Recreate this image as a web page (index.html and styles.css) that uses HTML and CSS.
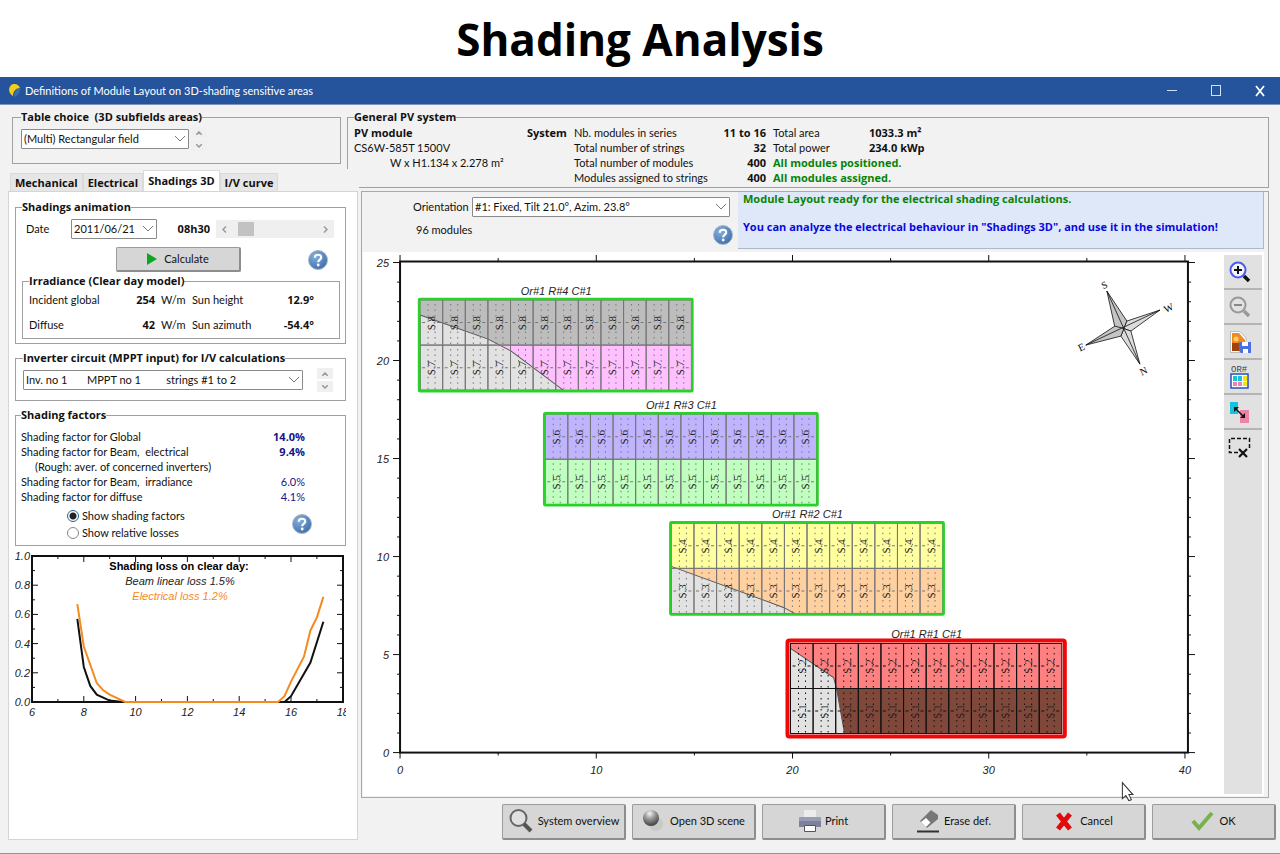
FILE: index.html
```html
<!DOCTYPE html>
<html lang="en">
	<head>
		<meta charset="UTF-8">
		<title>Shading Analysis</title>
		<link rel="stylesheet" href="styles.css">
	</head>
	<body>
		<svg width="0" height="0" class="defs">
			<defs>
				<radialGradient id="helpFill" cx="35%" cy="30%" r="75%">
					<stop offset="0" stop-color="#86b0dc"/>
					<stop offset="1" stop-color="#3f6fac"/>
				</radialGradient>
				<radialGradient id="ball" cx="42%" cy="22%" r="75%">
					<stop offset="0" stop-color="#f4f4f4"/>
					<stop offset=".45" stop-color="#9a9a9a"/>
					<stop offset="1" stop-color="#444"/>
				</radialGradient>
				<symbol id="help" viewBox="0 0 20 20">
					<circle cx="10" cy="10" r="9.5" fill="url(#helpFill)" stroke="#a9b9cc"/>
					<path d="M6.8 7.8 C6.8 3.8 13.4 3.8 13.2 7.6 C13 9.6 10.2 9.8 10.2 12.2" fill="none" stroke="#fff" stroke-width="2.2"/>
					<circle cx="10.2" cy="15" r="1.4" fill="#fff"/>
				</symbol>
				<symbol id="down" viewBox="0 0 12 7">
					<path d="M1 1 L6 6 L11 1" fill="none" stroke="#777"/>
				</symbol>
			</defs>
		</svg>

		<h1 class="title">Shading Analysis</h1>

		<div class="titlebar">
			<svg class="logo" width="13" height="15" viewBox="0 0 13 15">
				<path d="M11 5 C8 6 6 9 6 14 C9 13 12 10 12 6z" fill="#3d6fae"/>
				<path d="M5 13 C0 10 0 4 4 1.5 C8 0 11 2 12 5 C8 5 5 8 5 13z" fill="#f3cf1d"/>
			</svg>
			<span class="caption">Definitions of Module Layout on 3D-shading sensitive areas</span>
			<button class="winBtn" aria-label="Minimize"><svg width="12" height="12"><path d="M1 5.5H11" stroke="#cfe0fa"/></svg></button>
			<button class="winBtn" aria-label="Maximize"><svg width="12" height="12"><rect x="1.5" y="0.5" width="9" height="10" fill="none" stroke="#cfe0fa"/></svg></button>
			<button class="winBtn" aria-label="Close"><svg width="12" height="12"><path d="M2 1L10 11M10 1L2 11" stroke="#fff" stroke-width="1.8"/></svg></button>
		</div>

		<div class="window">
			<div class="top">
				<div class="choice">
					<fieldset class="tableChoice">
						<legend>Table choice&nbsp; (3D subfields areas)</legend>
						<span class="combo wField">
							<select aria-label="Table choice"><option>(Multi) Rectangular field</option></select>
							<svg class="arrow" width="12" height="7"><use href="#down"/></svg>
						</span>
						<span class="spin flat">
							<button aria-label="Previous table"><svg width="6" height="4"><path d="M0 4L3 1L6 4" fill="none" stroke="#999" stroke-width="1.5"/></svg></button>
							<button aria-label="Next table"><svg width="6" height="4"><path d="M0 0L3 3L6 0" fill="none" stroke="#999" stroke-width="1.5"/></svg></button>
						</span>
					</fieldset>
					<div class="tabs">
						<button>Mechanical</button>
						<button>Electrical</button>
						<button class="active">Shadings 3D</button>
						<button>I/V curve</button>
					</div>
				</div>
				<fieldset class="general">
					<legend>General PV system</legend>
					<div class="pv">
						<b>PV module</b><b>System</b><span>Nb. modules in series</span><b class="num">11 to 16</b><span>Total area</span><b>1033.3 m²</b>
						<span>CS6W-585T 1500V</span><span></span><span>Total number of strings</span><b class="num">32</b><span>Total power</span><b>234.0 kWp</b>
						<span class="dims">W x H1.134 x 2.278 m²</span><span></span><span>Total number of modules</span><b class="num">400</b><b class="ok">All modules positioned.</b>
						<span></span><span></span><span>Modules assigned to strings</span><b class="num">400</b><b class="ok">All modules assigned.</b>
					</div>
				</fieldset>
			</div>

			<div class="body">
				<div class="panel">
					<fieldset class="animation">
						<legend>Shadings animation</legend>
						<div class="dateRow">
							<label for="date">Date</label>
							<span class="combo wDate">
								<select id="date"><option>2011/06/21</option></select>
								<svg class="arrow" width="12" height="7"><use href="#down"/></svg>
							</span>
							<b class="hour">08h30</b>
							<div class="scroll">
								<button aria-label="Earlier"><svg width="5" height="7"><path d="M4 0.5L1 3.5L4 6.5" fill="none" stroke="#999" stroke-width="1.5"/></svg></button>
								<input type="range" min="5" max="20" value="6" aria-label="Time of day">
								<button aria-label="Later"><svg width="5" height="7"><path d="M1 0.5L4 3.5L1 6.5" fill="none" stroke="#999" stroke-width="1.5"/></svg></button>
							</div>
						</div>
						<div class="calcRow">
							<button class="btn calc"><svg width="10" height="12"><path d="M0 0L10 6L0 12z" fill="#0ea522"/></svg>Calculate</button>
							<svg class="help" width="20" height="20"><use href="#help"/></svg>
						</div>
						<fieldset class="irradiance">
							<legend>Irradiance (Clear day model)</legend>
							<div class="irrGrid">
								<span>Incident global</span><b class="num">254</b><span>W/m</span><span>Sun height</span><b class="num">12.9°</b>
								<span>Diffuse</span><b class="num">42</b><span>W/m</span><span>Sun azimuth</span><b class="num">-54.4°</b>
							</div>
						</fieldset>
					</fieldset>

					<fieldset class="inverter">
						<legend>Inverter circuit (MPPT input) for I/V calculations</legend>
						<span class="combo wInv">
							<select aria-label="Inverter circuit"><option>Inv. no 1 &nbsp; &nbsp; &nbsp; MPPT no 1 &nbsp; &nbsp; &nbsp; &nbsp; strings #1 to 2</option></select>
							<svg class="arrow" width="12" height="7"><use href="#down"/></svg>
						</span>
						<span class="spin">
							<button aria-label="Previous circuit"><svg width="6" height="4"><path d="M0 4L3 1L6 4" fill="none" stroke="#999" stroke-width="1.5"/></svg></button>
							<button aria-label="Next circuit"><svg width="6" height="4"><path d="M0 0L3 3L6 0" fill="none" stroke="#999" stroke-width="1.5"/></svg></button>
						</span>
					</fieldset>

					<fieldset class="factors">
						<legend>Shading factors</legend>
						<div class="factor"><span>Shading factor for Global</span><b>14.0%</b></div>
						<div class="factor"><span>Shading factor for Beam,&nbsp; electrical</span><b>9.4%</b></div>
						<div class="factor rough"><span>(Rough: aver. of concerned inverters)</span></div>
						<div class="factor"><span>Shading factor for Beam,&nbsp; irradiance</span><i>6.0%</i></div>
						<div class="factor"><span>Shading factor for diffuse</span><i>4.1%</i></div>
						<div class="show">
							<div>
								<label><input type="radio" name="show" checked>Show shading factors</label>
								<label><input type="radio" name="show">Show relative losses</label>
							</div>
							<svg class="help" width="20" height="20"><use href="#help"/></svg>
						</div>
					</fieldset>

					<svg class="lossChart" id="lossChart" viewBox="0 0 331 172"></svg>
				</div>

				<div class="right">
					<div class="layout">
						<div class="head">
							<div class="orient">
								<div class="orientRow">
									<label for="orient">Orientation</label>
									<span class="combo wOrient">
										<select id="orient"><option>#1: Fixed, Tilt 21.0°, Azim. 23.8°</option></select>
										<svg class="arrow" width="12" height="7"><use href="#down"/></svg>
									</span>
								</div>
								<div class="countRow">
									<span>96 modules</span>
									<svg class="help" width="20" height="20"><use href="#help"/></svg>
								</div>
							</div>
							<div class="message">
								<p class="ready">Module Layout ready for the electrical shading calculations.</p>
								<p class="hint">You can analyze the electrical behaviour in "Shadings 3D", and use it in the simulation!</p>
							</div>
						</div>
						<div class="plotRow">
							<svg class="plot" id="plot" viewBox="0 0 860 543"></svg>
							<div class="tools">
								<button aria-label="Zoom in"><svg width="24" height="24">
									<circle cx="10" cy="10" r="7.5" fill="#f4f4ff" stroke="#4a5cf0" stroke-width="2"/>
									<path d="M6 10H14M10 6V14" stroke="#111" stroke-width="2"/>
									<path d="M16 16L21 21" stroke="#111" stroke-width="3.5"/>
								</svg></button>
								<button aria-label="Zoom out"><svg width="24" height="24">
									<circle cx="10" cy="10" r="7.5" fill="none" stroke="#999" stroke-width="2"/>
									<path d="M6 10H14" stroke="#888" stroke-width="2"/>
									<path d="M16 16L21 21" stroke="#999" stroke-width="3.5"/>
								</svg></button>
								<button aria-label="Save picture"><svg width="24" height="24">
									<path d="M2.5 1.5H12L18 8V22.5H2.5z" fill="#fff" stroke="#bbb"/>
									<path d="M4 3H11L17 10V21H4z" fill="#f08a24"/>
									<path d="M4 13H17V21H4z" fill="#a3400f"/>
									<circle cx="8" cy="9" r="2.5" fill="#ffd257"/>
									<path d="M11 12H23V23H13L11 21z" fill="#4a6fe0"/>
									<path d="M14 12H20V16H14zM15 19H20V23H15z" fill="#fff"/>
								</svg></button>
								<button aria-label="Orientation colours"><svg width="24" height="26">
									<text x="3" y="8" class="orText">OR#</text>
									<rect x="3" y="10" width="17" height="14" fill="#fff" stroke="#2a4fc0" stroke-width="1.5"/>
									<path d="M5 12h4v5h-4zM10 12h4v5h-4z" fill="#16c3dc"/>
									<path d="M15 12h4v5h-4zM15 18h4v4h-4z" fill="#f0e616"/>
									<path d="M5 18h4v4h-4zM10 18h4v4h-4z" fill="#ee82a8"/>
								</svg></button>
								<button aria-label="Swap modules"><svg width="24" height="24">
									<path d="M2 2H10V14H2z" fill="#16c3dc"/>
									<path d="M12 10H21V23H12z" fill="#ee82a8"/>
									<path d="M8 9L15 16" stroke="#111" stroke-width="1.5"/>
									<path d="M6 7H11L6 12zM17 18H12L17 13z" fill="#111"/>
								</svg></button>
								<button aria-label="Clear selection"><svg width="24" height="24">
									<path d="M10 16.5H1.5V2.5H21.5V12" fill="none" stroke="#111" stroke-width="1.5" stroke-dasharray="4 2"/>
									<path d="M11 13L19 21M19 13L11 21" stroke="#111" stroke-width="2.2"/>
								</svg></button>
							</div>
						</div>
					</div>

					<div class="buttons">
						<button class="btn"><svg width="26" height="26">
							<circle cx="10.5" cy="10" r="8" fill="#e0e0e0" stroke="#666" stroke-width="2"/>
							<path d="M16 16L23 23" stroke="#555" stroke-width="4"/>
						</svg>System overview</button>
						<button class="btn"><svg width="24" height="24">
							<circle cx="14" cy="15" r="7" fill="#c6c9c6"/>
							<circle cx="9" cy="9" r="8" fill="url(#ball)"/>
						</svg>Open 3D scene</button>
						<button class="btn"><svg width="22" height="24">
							<path d="M5 1H17V9H5z" fill="#ececec"/>
							<path d="M0 8H22V18H0z" fill="#7f819b"/>
							<path d="M0 8H22V12H0z" fill="#9a9cb4"/>
							<path d="M5.5 16.5H16.5V22.5H5.5z" fill="#fff" stroke="#555"/>
						</svg>Print</button>
						<button class="btn"><svg width="24" height="24">
							<path d="M15 1L22 6V10L11 19L4 12z" fill="#777"/>
							<path d="M10 9L14.5 13.5L10 18L5 13z" fill="#fff"/>
							<path d="M1 22.5H23" stroke="#333" stroke-width="2"/>
						</svg>Erase def.</button>
						<button class="btn cancel"><svg width="20" height="20">
							<path d="M4 3L16 18M16 3L4 18" stroke="#e00b0b" stroke-width="5"/>
						</svg>Cancel</button>
						<button class="btn"><svg width="24" height="22">
							<path d="M2 11L8 18L21 3" fill="none" stroke="#79b24d" stroke-width="4"/>
						</svg>OK</button>
					</div>
				</div>
			</div>
		</div>

		<script src="script.js"></script>
	</body>
</html>
```
FILE: styles.css
```css
*{
	box-sizing: border-box;
	margin: 0;
	padding: 0;
}
body{
	background: #fff;
	color: #111;
	font: 11px/14px Lato, "Noto Sans", sans-serif;
}
button, select, input{
	font: inherit;
	color: inherit;
}
button{
	border: 0;
	background: none;
}
svg{
	display: block;
	flex-shrink: 0;
}
b, legend, .title, .tabs, .message{
	font-family: "Open Sans", "Noto Sans", sans-serif;
}
.defs{
	position: absolute;
}
.title{
	padding: 9px 0 8px;
	font-size: 44px;
	line-height: 60px;
	font-weight: bold;
	text-align: center;
	color: #000;
}

/* title bar */
.titlebar{
	display: flex;
	align-items: center;
	height: 28px;
	padding: 0 6px 0 8px;
	background: #25539c;
	border-bottom: 1px solid #7f93b8;
	color: #fff;
}
.titlebar .caption{
	flex: 1;
	margin-left: 4px;
}
.winBtn{
	display: flex;
	justify-content: center;
	width: 28px;
	margin-left: 16px;
}

/* window */
.window{
	background: #f2f2f2;
	border-bottom: 1px solid #7f93c8;
	padding-bottom: 13px;
}
fieldset{
	min-width: 0;
	border: 1px solid #a0a0a0;
}
legend{
	line-height: 12px;
	font-weight: bold;
}
.num{
	text-align: right;
}
.combo{
	display: block;
	position: relative;
}
.combo select{
	display: block;
	width: 100%;
	height: 20px;
	padding-left: 2px;
	border: 1px solid #8a8a8a;
	border-radius: 1px;
	background: #fff;
	appearance: none;
}
.combo .arrow{
	position: absolute;
	right: 3px;
	top: 6px;
	pointer-events: none;
}
.wField{
	width: 168px;
}
.wDate{
	width: 86px;
}
.wInv{
	width: 280px;
}
.wOrient{
	width: 258px;
}
.spin{
	display: flex;
	flex-direction: column;
	gap: 2px;
}
.spin button{
	display: flex;
	align-items: center;
	justify-content: center;
	width: 16px;
	height: 11px;
	background: #f0f0f0;
}
.btn{
	display: flex;
	align-items: center;
	justify-content: center;
	gap: 4px;
	background: #d6d6d6;
	border: 1px solid #9b9b9b;
	border-right: 2px solid #8d8d8d;
	border-bottom: 2px solid #8d8d8d;
	border-radius: 2px;
}

.top{
	display: flex;
	padding: 6px 11px 0 0;
}
.choice{
	display: flex;
	flex-direction: column;
	justify-content: space-between;
	width: 347px;
	padding-right: 6px;
}
.tableChoice{
	display: flex;
	align-items: center;
	gap: 2px;
	margin-left: 12px;
	padding: 4px 8px 12px;
}
.tabs{
	display: flex;
	align-items: flex-end;
	padding-left: 10px;
}
.tabs button{
	height: 18px;
	padding: 0 4px;
	background: #e6e6e6;
	border: 1px solid #dadada;
	border-bottom: 0;
	font-weight: bold;
}
.tabs .active{
	height: 21px;
	background: #fff;
}
.general{
	position: relative;
	flex: 1;
	margin-bottom: 3px;
	padding: 2px 6px;
}
/* the frame is open where the tabs pass below it */
.general::after{
	content: "";
	position: absolute;
	left: -1px;
	bottom: -1px;
	width: 12px;
	height: 19px;
	background: #f2f2f2;
}
.pv{
	display: grid;
	grid-template-columns: 173px 47px 140px 52px 96px 1fr;
	grid-auto-rows: 15px;
	line-height: 15px;
	white-space: nowrap;
}
.pv .num + *{
	margin-left: 7px;
}
.pv .num + * + b{
	padding-left: 7px;
}
.pv .num + .ok + *{
	padding-left: 0;
}
.pv .dims{
	padding-left: 36px;
}
.ok{
	grid-column: span 2;
	color: #078307;
}

.body{
	display: flex;
	gap: 3px;
	padding-left: 8px;
}
.panel{
	width: 350px;
	padding: 9px 11px 0 6px;
	background: #fff;
	border: 1px solid #d5d5d5;
}
.animation{
	padding: 5px 5px 4px 6px;
}
.irradiance legend{
	margin-left: 6px;
}
.dateRow{
	display: flex;
	align-items: center;
	height: 22px;
	padding: 0 6px 0 4px;
}
.dateRow label{
	width: 45px;
}
.hour{
	flex: 1;
	padding-right: 6px;
	text-align: right;
}
.scroll{
	display: flex;
	width: 118px;
	height: 18px;
	background: #efefef;
}
.scroll button{
	display: flex;
	align-items: center;
	justify-content: center;
	width: 17px;
}
.scroll input{
	flex: 1;
	min-width: 0;
	appearance: none;
	background: none;
}
.scroll input::-webkit-slider-thumb{
	appearance: none;
	width: 16px;
	height: 14px;
	background: #c2c2c2;
}
.calcRow{
	display: flex;
	align-items: center;
	justify-content: space-between;
	padding: 7px 12px 3px 94px;
}
.calc{
	width: 125px;
	height: 25px;
	gap: 7px;
}
.irradiance{
	padding: 6px 25px 6px 0;
}
.irrGrid{
	display: grid;
	grid-template-columns: 76px 44px 25px 80px 1fr;
	column-gap: 6px;
	row-gap: 11px;
	padding-left: 6px;
	white-space: nowrap;
}
.inverter{
	display: flex;
	align-items: center;
	justify-content: space-between;
	margin-top: 8px;
	padding: 4px 12px 8px 7px;
}
.factors{
	margin-top: 8px;
	padding: 8px 5px 4px 5px;
}
.factor{
	display: flex;
	justify-content: space-between;
	padding-right: 35px;
	line-height: 15px;
	color: #111;
}
.factor b, .factor i{
	color: #15158a;
	font-style: normal;
}
.rough{
	padding-left: 14px;
}
.show{
	display: flex;
	align-items: center;
	justify-content: space-between;
	padding: 3px 28px 0 46px;
}
.show label{
	display: flex;
	align-items: center;
	height: 17px;
}
.show input{
	appearance: none;
	width: 12px;
	height: 12px;
	margin-right: 3px;
	border: 1px solid #888;
	border-radius: 50%;
	background: #fff;
}
.show input:checked{
	border-color: #1d6491;
	background: radial-gradient(circle, #222 3px, #fff 4px);
}
.lossChart{
	width: 100%;
	margin-top: 2px;
}

/* right side */
.right{
	flex: 1;
	min-width: 0;
}
.layout{
	margin-right: 11px;
	padding: 0 4px 1px 1px;
	border: 1px solid #a9a9a9;
}
.head{
	display: flex;
	height: 60px;
}
.orient{
	width: 375px;
	padding: 5px 5px 0 50px;
}
.orientRow{
	display: flex;
	align-items: center;
}
.orientRow label{
	width: 59px;
}
.countRow{
	display: flex;
	justify-content: space-between;
	padding: 6px 0 0 3px;
}
.countRow .help{
	margin-top: 2px;
}
.message{
	flex: 1;
	height: 57px;
	padding-left: 5px;
	background: #dfe8f8;
	border-right: 1px solid #b0b8c4;
	border-bottom: 1px solid #b0b8c4;
	font-weight: bold;
}
.ready{
	margin-bottom: 14px;
	color: #078307;
}
.hint{
	color: #0808e0;
}
.plotRow{
	display: flex;
	background: #fff;
}
.plot{
	flex: 1;
	min-width: 0;
	overflow: visible;
}
.tools{
	width: 38px;
	margin: 3px 2px 2px 0;
	background: #e1e1e1;
}
.tools button{
	display: flex;
	align-items: center;
	width: 100%;
	height: 35px;
	padding-left: 4px;
	border-bottom: 2px solid #b4b4b4;
}
.tools button:last-child{
	border-bottom: 0;
}
.orText{
	font: 9px "Liberation Mono", monospace;
	fill: #444;
}
.buttons{
	display: flex;
	justify-content: flex-end;
	gap: 6px;
	padding: 6px 4px 0 0;
}
.buttons .btn{
	width: 124px;
	height: 36px;
}
.buttons .cancel{
	gap: 6px;
}

/* drawings */
.axis{
	font: italic 11px "Liberation Sans", Arial, sans-serif;
	fill: #222;
}
.electrical{
	fill: #f58a1f;
}
.chartTitle{
	font: bold 11px "Liberation Sans", Arial, sans-serif;
}
.tag{
	font: 11px "Liberation Serif", serif;
	fill: #222;
}
.compass{
	font: 10px "Liberation Serif", serif;
}
```
FILE: script.js
```js
var plot = document.getElementById("plot");
var lossChart = document.getElementById("lossChart");

function line(x1, y1, x2, y2, w){
	return '<path d="M' + x1 + ' ' + y1 + 'L' + x2 + ' ' + y2 + '" stroke="#111" stroke-width="' + w + '"/>';
}
function text(x, y, s, cls, anchor){
	return '<text x="' + x + '" y="' + y + '" class="' + cls + '" text-anchor="' + anchor + '">' + s + '</text>';
}

// module layout: metres to drawing units
function px(v){ return 37 + v * 19.6; }
function py(v){ return 500 - v * 19.58; }

var out = '<rect x="37" y="9.5" width="787" height="490.5" fill="#fff" stroke="#111" stroke-width="2"/>';
for(var i = 0; i <= 40; i += 5){
	var big = i % 10 == 0;
	out += line(px(i), 500, px(i), big ? 506 : 503, 1);
	out += line(px(i), 9, px(i), big ? 3 : 6, 1);
	if(big){
		out += text(px(i), 521, i, "axis", "middle");
	}
}
for(i = 0; i <= 25; i++){
	big = i % 5 == 0;
	out += line(big ? 30 : 34, py(i), 37, py(i), 1);
	out += line(824, py(i), big ? 831 : 827, py(i), 1);
	if(big){
		out += text(26, py(i) + 4, i, "axis", "end");
	}
}

var tables = [
	{x: 57, y: 48, up: "#bdbdbd", down: "#ffc0ff", n: 8, shade: "57,63 125,87 148,99 200,138 57,138", name: "Or#1 R#4 C#1"},
	{x: 182, y: 162, up: "#c0b4ff", down: "#c0ffc0", n: 6, name: "Or#1 R#3 C#1"},
	{x: 308, y: 271, up: "#ffffa0", down: "#ffd0a0", n: 4, shade: "308,314 420,355 431,361 308,361", name: "Or#1 R#2 C#1"},
	{x: 427, y: 391, up: "#ff8080", down: "#80483a", n: 2, shade: "427,396 470,425 473,436 481,481 427,481", name: "Or#1 R#1 C#1", selected: true}
];
tables.forEach(function(t){
	var dark = t.selected ? "#111" : "#777";
	var w = 271, h = 90, m = w / 12;
	out += text(t.x + 136, t.y - 5, t.name, "axis", "middle");
	out += '<rect x="' + t.x + '" y="' + t.y + '" width="' + w + '" height="45" fill="' + t.up + '"/>';
	out += '<rect x="' + t.x + '" y="' + (t.y + 45) + '" width="' + w + '" height="45" fill="' + t.down + '"/>';
	if(t.shade){
		out += '<polygon points="' + t.shade + '" fill="#e2e2e2" stroke="#555"/>';
	}
	for(var c = 0; c < 12; c++){
		var x = t.x + c * m;
		for(var r = 0; r < 2; r++){
			var y = t.y + r * 45;
			out += '<rect x="' + x + '" y="' + y + '" width="' + m + '" height="45" fill="none" stroke="' + dark + '"/>';
			// cell dots
			out += '<path d="M' + (x + 8) + ' ' + (y + 4) + 'v40M' + (x + 15) + ' ' + (y + 4) + 'v40" stroke="' + dark + '" stroke-dasharray="1.5 4"/>';
			out += '<path d="M' + (x + 2) + ' ' + (y + 22.5) + 'h3M' + (x + 17) + ' ' + (y + 22.5) + 'h3" stroke="' + dark + '"/>';
			out += '<text class="tag" text-anchor="middle" transform="translate(' + (x + 15) + ' ' + (y + 23) + ') rotate(-90)">S.' + (t.n - r) + '</text>';
		}
	}
	if(t.selected){
		out += '<rect x="' + (t.x - 3) + '" y="' + (t.y - 3) + '" width="277" height="96" rx="2" fill="none" stroke="#f00808" stroke-width="4"/>';
	}else{
		out += '<rect x="' + (t.x - 1) + '" y="' + (t.y - 1) + '" width="273" height="92" rx="1" fill="none" stroke="#28d228" stroke-width="2.5"/>';
	}
});

// compass rose, then the mouse pointer
out += '<g stroke="#111" stroke-width="0.8">' +
	'<path d="M743 39L763 69L760 76.5L751 75z" fill="#c4c4c4"/>' +
	'<path d="M796 58L767 79L760 76.5L763 69z" fill="#dcdcdc"/>' +
	'<path d="M776 112L757 84L760 76.5L767 79z" fill="#dcdcdc"/>' +
	'<path d="M722 93L751 74L760 76.5L757 84z" fill="#c4c4c4"/>' +
	'<path d="M743 39L776 112M722 93L796 58"/></g>';
out += '<text class="compass" text-anchor="middle" transform="translate(742 36) rotate(-25)">S</text>';
out += '<text class="compass" text-anchor="middle" transform="translate(806 59) rotate(-25)">W</text>';
out += '<text class="compass" text-anchor="middle" transform="translate(719 98) rotate(-25)">E</text>';
out += '<text class="compass" text-anchor="middle" transform="translate(781 122) rotate(-25)">N</text>';
out += '<path d="M758.5 530V546L762 543L765 548L767.5 547L765 542H769z" fill="#fff" stroke="#333"/>';
plot.innerHTML = out;

// loss chart: hours and loss fraction to drawing units
function hx(v){ return 17 + (v - 6) * 25.9; }
function ly(v){ return 154 - v * 146; }
function curve(points, color){
	var d = points.map(function(p){ return hx(p[0]) + "," + ly(p[1]); }).join(" ");
	return '<polyline points="' + d + '" fill="none" stroke="' + color + '" stroke-width="2"/>';
}

out = '<rect x="17" y="8" width="311" height="146" fill="#fff" stroke="#111" stroke-width="2"/>';
for(i = 6; i <= 18; i++){
	big = i % 2 == 0;
	out += line(hx(i), 8, hx(i), big ? 14 : 11, 1) + line(hx(i), 154, hx(i), big ? 148 : 151, 1);
	if(big){
		out += text(hx(i), 168, i, "axis", "middle");
	}
}
for(i = 0; i <= 10; i++){
	var y = ly(i / 10);
	big = i % 2 == 0;
	out += line(17, y, big ? 23 : 20, y, 1) + line(big ? 322 : 325, y, 328, y, 1);
	if(big){
		out += text(15, y + 4, (i / 10).toFixed(1), "axis", "end");
	}
}
out += curve([[7.75, .57], [8, .24], [8.25, .11], [8.5, .05], [9, .01], [9.5, 0], [15.75, 0], [16, .04], [16.75, .27], [17.25, .55]], "#111");
out += curve([[7.75, .67], [8, .38], [8.5, .13], [8.75, .08], [9, .05], [9.6, 0], [15.5, 0], [15.75, .04], [16, .14], [16.5, .31], [16.75, .49], [17, .58], [17.25, .72]], "#f58a1f");
out += text(164, 22, "Shading loss on clear day:", "chartTitle", "middle");
out += text(165, 37, "Beam linear loss 1.5%", "axis", "middle");
out += text(165, 52, "Electrical loss 1.2%", "axis electrical", "middle");
lossChart.innerHTML = out;
```
